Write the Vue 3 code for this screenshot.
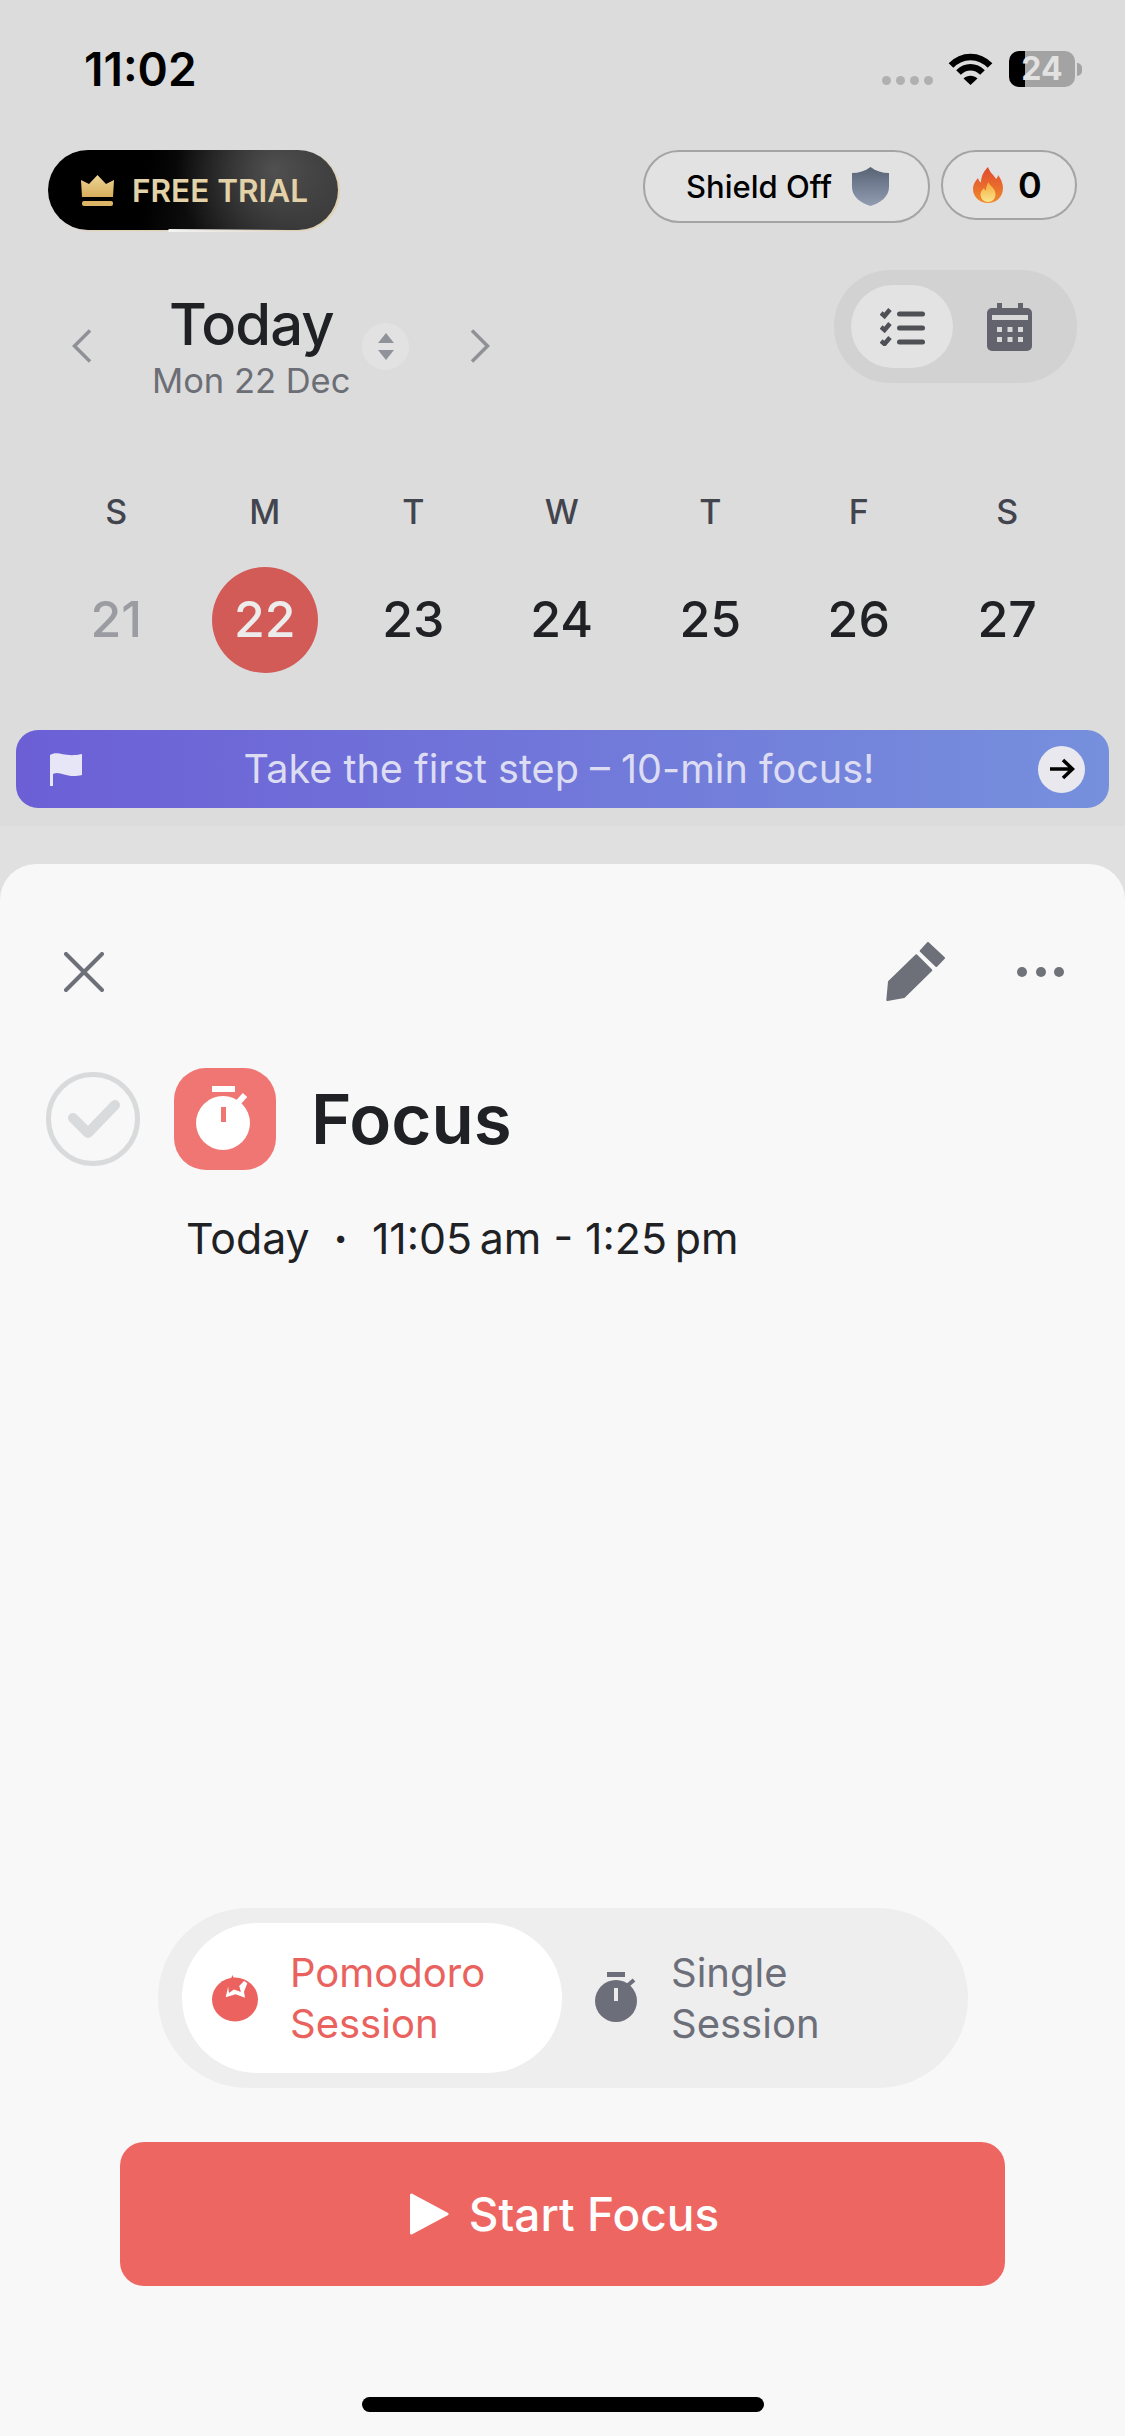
<template>
  <div class="page">
    <div class="backdrop">
      <div class="status">
        <span class="time">11:02</span>
        <div class="status-right">
          <div class="signal"><i></i><i></i><i></i><i></i></div>
          <svg class="wifi" width="45" height="33" viewBox="0 0 45 33">
            <path d="M3 13.500C14 2 31 2 42 13.500" fill="none" stroke="#000" stroke-width="6.500" />
            <path d="M10.500 20.500C17.500 13.500 27.500 13.500 34.500 20.500" fill="none" stroke="#000" stroke-width="6.500" />
            <path d="M15.500 26.500C19.500 22.800 25.500 22.800 29.500 26.500L22.500 33Z" fill="#000" />
          </svg>
          <div class="battery">24</div>
          <div class="battery-nub"></div>
        </div>
      </div>

      <div class="top-row">
        <div class="trial">
          <svg width="33" height="31" viewBox="0 0 33 31">
            <defs>
              <linearGradient id="crownFill" x1="0" y1="0" x2="0" y2="1">
                <stop offset="0" stop-color="#ecd596" />
                <stop offset="1" stop-color="#d8ae5c" />
              </linearGradient>
            </defs>
            <path d="M0 5L8 9L16.500 0L25 9L33 5L32 22H1Z" fill="url(#crownFill)" stroke-linejoin="round" />
            <rect x="1" y="26" width="31" height="5" rx="2" fill="#dcb566" />
          </svg>
          <span>FREE TRIAL</span>
        </div>
        <div class="pills">
          <div class="pill shield">
            <span>Shield Off</span>
            <svg width="37" height="39" viewBox="0 0 37 39">
              <defs>
                <linearGradient id="shieldFill" x1="0" y1="0" x2="0" y2="1">
                  <stop offset="0" stop-color="#576375" />
                  <stop offset="1" stop-color="#929db2" />
                </linearGradient>
              </defs>
              <path d="M18.500 0C24 4 30 6 37 6V20C37 30 28 36 18.500 39C9 36 0 30 0 20V6C7 6 13 4 18.500 0Z" fill="url(#shieldFill)" />
            </svg>
          </div>
          <div class="pill streak">
            <svg width="30" height="36" viewBox="0 0 30 36">
              <defs>
                <linearGradient id="flameFill" x1="0" y1="0" x2="0" y2="1">
                  <stop offset="0" stop-color="#e0492f" />
                  <stop offset="1" stop-color="#f08a2c" />
                </linearGradient>
                <linearGradient id="flameCore" x1="0" y1="0" x2="0" y2="1">
                  <stop offset="0" stop-color="#f7a935" />
                  <stop offset="1" stop-color="#f8e58e" />
                </linearGradient>
              </defs>
              <path d="M15 0C17 6 21 8 23 12C24.500 10.500 25 9.500 25 8C28 12 30 16.500 30 21C30 30 23 36 15 36C7 36 0 30 0 22C0 17 3 13.500 5 11C5.500 13 6.500 14.500 8 15.500C8 9 11 4 15 0Z" fill="url(#flameFill)" />
              <path d="M15.500 15C16.500 19 22.500 21 22.500 27.500C22.500 32 19 35 15 35C11 35 7.500 32 7.500 27.500C7.500 24.500 9.500 22.500 11 21C11.500 22.500 12 23 13 23.500C13 20.500 14 17.500 15.500 15Z" fill="url(#flameCore)" />
            </svg>
            <span>0</span>
          </div>
        </div>
      </div>

      <div class="date-row">
        <div class="date-nav">
          <svg width="20" height="34" viewBox="0 0 20 34">
            <path d="M18 1.500L2.500 17L18 32.500" fill="none" stroke="#8f9196" stroke-width="3.500" />
          </svg>
          <div class="date-text">
            <div class="date-title">Today</div>
            <div class="date-sub">Mon 22 Dec</div>
          </div>
          <div class="updown">
            <svg width="16" height="27" viewBox="0 0 16 27">
              <path d="M8 0L16 10H0Z" fill="#909299" />
              <path d="M8 27L16 17H0Z" fill="#909299" />
            </svg>
          </div>
          <svg class="next" width="20" height="34" viewBox="0 0 20 34">
            <path d="M2 1.500L17.500 17L2 32.500" fill="none" stroke="#8f9196" stroke-width="3.500" />
          </svg>
        </div>
        <div class="view-toggle">
          <div class="view-active">
            <svg width="45" height="38" viewBox="0 0 45 38">
              <g v-for="y in [0, 14, 28]" :key="y" :transform="`translate(0 ${y})`">
                <path d="M1 5L4.500 8L10 1.500" fill="none" stroke="#4f5055" stroke-width="4.500" />
                <rect x="17" y="3.500" width="28" height="5" rx="2.500" fill="#4f5055" />
              </g>
            </svg>
          </div>
          <svg class="cal" width="45" height="48" viewBox="0 0 45 48">
            <rect x="0" y="5" width="45" height="43" rx="5" fill="#62636c" />
            <rect x="10" y="0" width="5" height="9" fill="#62636c" />
            <rect x="31" y="0" width="5" height="9" fill="#62636c" />
            <rect x="5" y="12" width="36" height="5" fill="#d8d8d8" />
            <template v-for="y in [24, 34]" :key="y">
              <rect v-for="x in [10, 20.500, 31]" :key="x" :x="x" :y="y" width="5" height="5" fill="#d8d8d8" />
            </template>
          </svg>
        </div>
      </div>

      <div class="week">
        <div v-for="(d, i) in weekdays" :key="i" class="weekday">{{ d }}</div>
        <div
          v-for="(n, i) in days"
          :key="n"
          class="day"
          :class="{ muted: i === 0, selected: i === 1 }"
        >
          <span>{{ n }}</span>
        </div>
      </div>

      <div class="banner">
        <svg width="32" height="34" viewBox="0 0 32 34">
          <path d="M0 3C8 -2 14 6 32 2V23C16 27 10 18 3 22V34H0Z" fill="#e6e6f6" />
        </svg>
        <span class="banner-text">Take the first step – 10-min focus!</span>
        <div class="banner-go">
          <svg width="26" height="22" viewBox="0 0 26 22">
            <path d="M1 11H23M14 2L23.500 11L14 20" fill="none" stroke="#000" stroke-width="3.500" />
          </svg>
        </div>
      </div>
    </div>

    <div class="sheet">
      <div class="sheet-head">
        <svg width="40" height="40" viewBox="0 0 40 40">
          <path d="M2 2L38 38M38 2L2 38" fill="none" stroke="#6e7079" stroke-width="4" stroke-linecap="round" />
        </svg>
        <div class="sheet-actions">
          <svg width="60" height="60" viewBox="0 0 60 60">
            <path d="M43 1L59 16L51.300 24L35.700 9Z" fill="#6e7079" stroke="#6e7079" stroke-width="2" stroke-linejoin="round" />
            <path d="M31.300 13.300L46.300 28.300L19 55L2.300 58L4 39.700Z" fill="#6e7079" stroke="#6e7079" stroke-width="2" stroke-linejoin="round" />
          </svg>
          <div class="more"><i></i><i></i><i></i></div>
        </div>
      </div>

      <div class="task">
        <svg width="94" height="94" viewBox="0 0 94 94">
          <circle cx="47" cy="47" r="44.500" fill="none" stroke="#d9dadb" stroke-width="5" />
          <path d="M27 46L42 61L69 33" fill="none" stroke="#d9dadb" stroke-width="10" stroke-linecap="round" stroke-linejoin="round" />
        </svg>
        <div class="task-icon">
          <svg width="102" height="102" viewBox="0 0 102 102">
            <rect x="38" y="18" width="23" height="6" fill="#fff" />
            <circle cx="49" cy="55" r="27" fill="#fff" />
            <path d="M62 37L71 27" stroke="#fff" stroke-width="6" />
            <rect x="47" y="39" width="5" height="15" fill="#ef7672" />
          </svg>
        </div>
        <h1>Focus</h1>
      </div>

      <div class="task-time">
        <span>Today</span>
        <span class="sep">·</span>
        <span>11:05&#8239;am - 1:25&#8239;pm</span>
      </div>

      <div class="mode">
        <div class="mode-item active">
          <svg width="48" height="50" viewBox="6 8 48 50">
            <ellipse cx="30" cy="34.500" rx="23" ry="22" fill="#ec625e" />
            <path d="M23.300 21L24 27.700L29 24.300L35.700 26.700L34 21L39 15.700L42.300 18.300L39 26.700L40 32.700L30.700 29.300L20.700 32.300Z" fill="#fff" />
            <path d="M27.300 10L30 15L39 15.700L34 21L35.700 26.700L29 24.300L24 27.700L23.300 20L15.700 16.700L25.700 15Z" fill="#ec625e" />
          </svg>
          <div class="mode-label">Pomodoro<br />Session</div>
        </div>
        <div class="mode-item other">
          <svg width="42" height="54" viewBox="0 0 42 54">
            <rect x="12" y="1" width="18" height="5" fill="#6c6f7a" />
            <circle cx="21" cy="30" r="21" fill="#6c6f7a" />
            <path d="M32 15L39 9" stroke="#6c6f7a" stroke-width="4" />
            <rect x="19" y="17" width="4" height="13" fill="#ececec" />
          </svg>
          <div class="mode-label">Single<br />Session</div>
        </div>
      </div>

      <button class="start">
        <svg width="40" height="42" viewBox="0 0 40 42">
          <path d="M2.500 2L38 21L2.500 40Z" fill="#fff" stroke="#fff" stroke-width="3" stroke-linejoin="round" />
        </svg>
        <span>Start Focus</span>
      </button>

      <div class="home-bar"></div>
    </div>
  </div>
</template>

<script setup>
const weekdays = ['S', 'M', 'T', 'W', 'T', 'F', 'S'];
const days = [21, 22, 23, 24, 25, 26, 27];
</script>

<style scoped>
.page {
  width: 1125px;
  height: 2436px;
  display: flex;
  flex-direction: column;
  overflow: hidden;
  background: #e0e0e0;
  font-family: Inter, "Liberation Sans", sans-serif;
  color: #202124;
}

.backdrop {
  height: 864px;
  flex: none;
  background: linear-gradient(#dcdcdc 826px, #e0e0e0 826px);
}

.status {
  height: 99px;
  padding: 51px 43px 0 84px;
  display: flex;
  justify-content: space-between;
  align-items: flex-start;
}

.time {
  margin-top: -4px;
  font-size: 46px;
  line-height: 44px;
  font-weight: 600;
  color: #000;
}

.status-right {
  height: 36px;
  display: flex;
  align-items: flex-end;
}

.signal {
  display: flex;
  gap: 5px;
  margin-bottom: 2px;
  margin-right: 15px;
}

.signal i {
  width: 9px;
  height: 9px;
  border-radius: 50%;
  background: #b0b0b0;
}

.wifi {
  margin-right: 16px;
  margin-bottom: 2px;
}

.battery {
  width: 66px;
  height: 36px;
  border-radius: 10px;
  background: linear-gradient(to right, #000 16px, #a3a3a3 16px);
  color: #e2e2e2;
  font-size: 32px;
  font-weight: 700;
  line-height: 36px;
  text-align: center;
}

.battery-nub {
  width: 5px;
  height: 13px;
  margin-left: 2px;
  align-self: center;
  border-radius: 0 6px 6px 0;
  background: #a3a3a3;
}

.top-row {
  height: 80px;
  padding: 0 48px;
  display: flex;
  justify-content: space-between;
  align-items: flex-start;
}

.trial {
  position: relative;
  width: 290px;
  height: 80px;
  box-sizing: border-box;
  padding-left: 33px;
  display: flex;
  align-items: center;
  gap: 18px;
  border-radius: 40px;
  background:
    radial-gradient(circle at 78% 25%, rgba(100, 100, 100, 0.7) 0, rgba(90, 90, 90, 0) 42%),
    linear-gradient(100deg, #000 34%, #363636 100%);
  box-shadow: 2px 1px 1px rgba(226, 206, 165, 0.85);
  color: #e3d2a8;
  font-size: 31.5px;
  font-weight: 600;
}

/* little highlight on the lower edge of the badge */
.trial::after {
  content: "";
  position: absolute;
  left: 120px;
  bottom: -2px;
  width: 120px;
  height: 3px;
  border-radius: 2px;
  background: linear-gradient(90deg, #f4f4f4, rgba(226, 226, 226, 0));
}

.pills {
  display: flex;
  gap: 11px;
}

.pill {
  box-sizing: border-box;
  display: flex;
  align-items: center;
  border: 2px solid #a4a4a4;
  background: #e2e2e2;
  border-radius: 36px;
  color: #000;
  font-weight: 500;
}

.shield {
  width: 287px;
  height: 73px;
  padding-left: 41px;
  gap: 20px;
  font-size: 31px;
}

.streak {
  width: 136px;
  height: 70px;
  padding-left: 30px;
  gap: 15px;
  font-size: 36px;
  font-weight: 600;
}

.date-row {
  height: 129px;
  margin-top: 40px;
  padding: 0 48px 0 72px;
  display: flex;
  justify-content: space-between;
  align-items: flex-start;
}

.date-nav {
  margin-top: 23px;
  display: flex;
  align-items: center;
}

.date-text {
  margin-left: 60px;
  text-align: center;
}

.date-title {
  font-size: 58px;
  line-height: 62px;
  font-weight: 500;
  letter-spacing: -1px;
  color: #202124;
}

.date-sub {
  margin-top: 8px;
  font-size: 34.5px;
  line-height: 36px;
  color: #6c6e76;
}

.updown {
  width: 47px;
  height: 47px;
  margin-left: 12px;
  display: flex;
  align-items: center;
  justify-content: center;
  border-radius: 50%;
  background: #e2e2e2;
}

.next {
  margin-left: 61px;
}

.view-toggle {
  width: 243px;
  height: 113px;
  box-sizing: border-box;
  padding: 15px 17px;
  display: flex;
  align-items: center;
  border-radius: 56px;
  background: #d2d2d2;
}

.view-active {
  width: 102px;
  height: 83px;
  display: flex;
  align-items: center;
  justify-content: center;
  border-radius: 42px;
  background: #e3e3e3;
}

.cal {
  margin-left: 34px;
}

.week {
  margin-top: 92px;
  padding-left: 42px;
  display: grid;
  grid-template-columns: repeat(7, 148.5px);
  grid-template-rows: 42px 106px;
  row-gap: 34px;
}

.weekday {
  text-align: center;
  font-size: 34px;
  line-height: 42px;
  font-weight: 500;
  color: #43454e;
}

.day {
  display: flex;
  align-items: center;
  justify-content: center;
  font-size: 50px;
  font-weight: 500;
}

.day span {
  width: 106px;
  height: 106px;
  box-sizing: border-box;
  padding-bottom: 2px;
  display: flex;
  align-items: center;
  justify-content: center;
  border-radius: 50%;
}

.day.muted {
  color: #9b9ca1;
}

.day.selected span {
  background: #d25b57;
  color: #ececec;
}

.banner {
  height: 78px;
  margin: 57px 16px 0;
  padding: 0 24px 0 34px;
  display: flex;
  align-items: center;
  border-radius: 22px;
  background: linear-gradient(90deg, #6c5fd6, #7690dd);
}

.banner-text {
  flex: 1;
  padding-right: 2px;
  text-align: center;
  font-size: 39.6px;
  color: #dcdcf2;
}

.banner-go {
  width: 47px;
  height: 47px;
  display: flex;
  align-items: center;
  justify-content: center;
  border-radius: 50%;
  background: #e8e8ee;
}

.sheet {
  flex: 1;
  box-sizing: border-box;
  padding: 76px 0 24px;
  display: flex;
  flex-direction: column;
  border-radius: 36px 36px 0 0;
  background: #f8f8f8;
}

.sheet-head {
  height: 64px;
  padding: 0 61px 0 64px;
  display: flex;
  justify-content: space-between;
  align-items: center;
}

.sheet-actions {
  display: flex;
  align-items: center;
  gap: 72px;
}

.more {
  display: flex;
  gap: 8.5px;
}

.more i {
  width: 10px;
  height: 10px;
  border-radius: 50%;
  background: #707279;
}

.task {
  margin-top: 64px;
  padding-left: 46px;
  display: flex;
  align-items: center;
}

.task-icon {
  width: 102px;
  height: 102px;
  margin-left: 34px;
  border-radius: 32px;
  background: #ef7672;
}

.task h1 {
  margin: 0 0 0 35px;
  font-size: 69px;
  font-weight: 600;
  color: #202124;
}

.task-time {
  margin-top: 42px;
  padding-left: 186px;
  display: flex;
  gap: 24px;
  font-size: 42.8px;
  line-height: 54px;
}

.sep {
  font-weight: 700;
}

.mode {
  width: 810px;
  height: 180px;
  box-sizing: border-box;
  margin: auto 0 0 158px;
  padding: 15px 24px;
  display: flex;
  border-radius: 90px;
  background: #eeeeee;
}

.mode-item {
  display: flex;
  align-items: center;
  gap: 31px;
  font-size: 40px;
  line-height: 51px;
  color: #6c6f7a;
}

.mode-item.other {
  margin-left: 33px;
  gap: 34px;
}

.mode-item.active {
  width: 380px;
  height: 150px;
  box-sizing: border-box;
  padding-left: 29px;
  border-radius: 75px;
  background: #fff;
  color: #e9625e;
}

.start {
  width: 885px;
  height: 144px;
  margin: 54px 0 0 120px;
  padding: 0 0 0 3px;
  display: flex;
  align-items: center;
  justify-content: center;
  gap: 20px;
  border: 0;
  border-radius: 24px;
  background: #ee6662;
  color: #fff;
  font-family: inherit;
  font-size: 46px;
  font-weight: 500;
}

.home-bar {
  width: 402px;
  height: 15px;
  margin: 111px auto 0;
  border-radius: 8px;
  background: #000;
}
</style>
